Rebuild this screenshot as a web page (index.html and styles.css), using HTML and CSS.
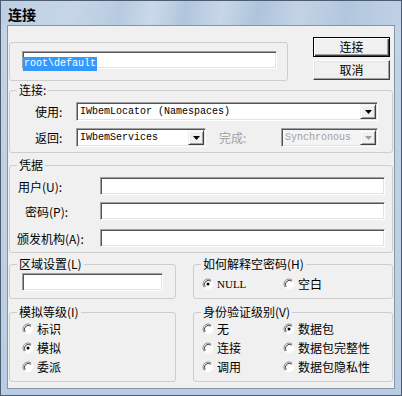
FILE: index.html
```html
<!DOCTYPE html>
<html lang="zh-CN">
<head>
<meta charset="utf-8">
<title>连接</title>
<link rel="stylesheet" href="styles.css">
</head>
<body>
<svg class="defs" width="0" height="0" aria-hidden="true">
  <defs>
    <symbol id="radio" viewBox="0 0 12 12">
      <circle cx="6" cy="6" r="4.5" fill="#fff"/>
      <path d="M9.54 2.46 A5 5 0 0 0 2.46 9.54" fill="none" stroke="#8a8a8a" stroke-width="1"/>
      <path d="M8.8 3.2 A4 4 0 0 0 3.2 8.8" fill="none" stroke="#404040" stroke-width="1"/>
      <path d="M2.46 9.54 A5 5 0 0 0 9.54 2.46" fill="none" stroke="#ffffff" stroke-width="1"/>
    </symbol>
    <symbol id="arrow" viewBox="0 0 7 4">
      <polygon points="0,0 7,0 3.5,4"/>
    </symbol>
  </defs>
</svg>
<div class="window">
  <div class="titlebar"><span class="title">连接</span></div>
  <div class="client">
    <div class="toprow">
      <div class="plainbox">
        <div class="edit ns"><span class="sel">root\default</span></div>
      </div>
      <div class="buttons">
        <button class="btn default">连接</button>
        <button class="btn">取消</button>
      </div>
    </div>

    <fieldset class="group conn">
      <legend>连接:</legend>
      <div class="crow r1">
        <span class="clabel">使用:</span>
        <div class="combo w-use"><span class="ctext">IWbemLocator (Namespaces)</span><span class="dd"><svg width="7" height="4"><use href="#arrow"/></svg></span></div>
      </div>
      <div class="crow r2">
        <span class="clabel">返回:</span>
        <div class="combo w-ret"><span class="ctext">IWbemServices</span><span class="dd"><svg width="7" height="4"><use href="#arrow"/></svg></span></div>
        <span class="clabel dis done">完成:</span>
        <div class="combo w-sync disabled"><span class="ctext">Synchronous</span><span class="dd"><svg width="7" height="4"><use href="#arrow"/></svg></span></div>
      </div>
    </fieldset>

    <fieldset class="group cred">
      <legend>凭据</legend>
      <div class="frow f1"><span class="flabel l-user">用户(U):</span><div class="edit fedit"></div></div>
      <div class="frow f2"><span class="flabel l-pass">密码(P):</span><div class="edit fedit"></div></div>
      <div class="frow f3"><span class="flabel l-auth">颁发机构(A):</span><div class="edit fedit"></div></div>
    </fieldset>

    <div class="pair">
      <fieldset class="group left locale">
        <legend>区域设置(L)</legend>
        <div class="edit ledit"></div>
      </fieldset>
      <fieldset class="group right nullpw">
        <legend>如何解释空密码(H)</legend>
        <div class="rgrid one">
          <label class="radio"><svg class="rb" width="12" height="12"><use href="#radio"/><circle cx="6" cy="6" r="1.5" fill="#000"/></svg><span class="lat">NULL</span></label>
          <label class="radio"><svg class="rb" width="12" height="12"><use href="#radio"/></svg><span>空白</span></label>
        </div>
      </fieldset>
    </div>

    <div class="pair second">
      <fieldset class="group left imp">
        <legend>模拟等级(I)</legend>
        <div class="rcol">
          <label class="radio"><svg class="rb" width="12" height="12"><use href="#radio"/></svg><span>标识</span></label>
          <label class="radio"><svg class="rb" width="12" height="12"><use href="#radio"/><circle cx="6" cy="6" r="1.5" fill="#000"/></svg><span>模拟</span></label>
          <label class="radio"><svg class="rb" width="12" height="12"><use href="#radio"/></svg><span>委派</span></label>
        </div>
      </fieldset>
      <fieldset class="group right auth">
        <legend>身份验证级别(V)</legend>
        <div class="rgrid three">
          <label class="radio"><svg class="rb" width="12" height="12"><use href="#radio"/></svg><span>无</span></label>
          <label class="radio"><svg class="rb" width="12" height="12"><use href="#radio"/><circle cx="6" cy="6" r="1.5" fill="#000"/></svg><span>数据包</span></label>
          <label class="radio"><svg class="rb" width="12" height="12"><use href="#radio"/></svg><span>连接</span></label>
          <label class="radio"><svg class="rb" width="12" height="12"><use href="#radio"/></svg><span>数据包完整性</span></label>
          <label class="radio"><svg class="rb" width="12" height="12"><use href="#radio"/></svg><span>调用</span></label>
          <label class="radio"><svg class="rb" width="12" height="12"><use href="#radio"/></svg><span>数据包隐私性</span></label>
        </div>
      </fieldset>
    </div>
  </div>
</div>
</body>
</html>
```

FILE: styles.css
```css
* { box-sizing: border-box; }
html, body { margin: 0; padding: 0; }
body {
  width: 402px;
  height: 396px;
  overflow: hidden;
  background: #fff;
  font-family: "Noto Sans CJK SC", "Noto Sans", sans-serif;
  font-size: 12px;
  color: #000;
}
.defs { position: absolute; width: 0; height: 0; }

.window {
  width: 402px;
  height: 396px;
  border: 1px solid #4d5c70;
  padding: 0 6px 6px 6px;
  display: flex;
  flex-direction: column;
  background: linear-gradient(180deg, #c3d4e6 0%, #bfd0e3 60%, #b9cce1 100%);
}
.titlebar {
  height: 24px;
  margin: 0 -6px;
  padding: 5px 0 0 7px;
  background:
    linear-gradient(100deg,
      #bccfe3 0%, #c6d6e8 18%, #b7cbe0 30%, #cbd9e9 38%, #b0c6dd 46%,
      #c8d7e8 55%, #aec4dc 64%, #c3d3e5 74%, #b2c7de 86%, #c0d1e4 100%);
}
.title {
  font-size: 14px;
  font-weight: bold;
  line-height: 17px;
  color: #000;
}
.client {
  width: 388px;
  height: 364px;
  border: 1px solid #8395aa;
  background: #f0f0f0;
  padding: 0 0 0 1px;
}

/* top row */
.toprow { display: flex; align-items: flex-start; }
.plainbox {
  width: 279px;
  height: 39px;
  margin-top: 16px;
  border: 1px solid #cdcdcd;
  border-radius: 3px;
  padding: 8px 0 0 12px;
}
.buttons {
  margin-left: 25px;
  margin-top: 11px;
  display: flex;
  flex-direction: column;
  gap: 3px;
}
.btn {
  width: 77px;
  height: 20px;
  padding: 0;
  font-family: "Noto Sans CJK SC", sans-serif;
  font-size: 12px;
  line-height: 16px;
  color: #000;
  background: #f0f0f0;
  border: 1px solid;
  border-color: #fff #404040 #404040 #fff;
  box-shadow: inset -1px -1px #a0a0a0, inset 1px 1px #e3e3e3;
}
.btn.default {
  border: 1px solid #000;
  box-shadow: inset 1px 1px #fff, inset -1px -1px #404040, inset -2px -2px #a0a0a0;
}

/* edits */
.edit {
  background: #fff;
  height: 18px;
  border: 1px solid;
  border-color: #a0a0a0 #fff #fff #a0a0a0;
  box-shadow: inset 1px 1px #555, inset -1px -1px #e3e3e3;
}
.ns { width: 255px; padding: 0 0 0 0; }
.sel {
  display: inline-block;
  background: #3399ff;
  color: #fff;
  font-family: "Liberation Mono", monospace;
  font-size: 10px;
  line-height: 14px;
  padding: 0 1px;
}

/* group boxes */
.group {
  margin: 0;
  padding: 0;
  min-width: 0;
  border: 1px solid #cdcdcd;
  border-radius: 3px;
}
.group legend {
  margin-left: 7px;
  padding: 0 2px;
  font-size: 12px;
  line-height: 14px;
}
.conn { width: 384px; margin-top: 2px; padding-bottom: 5px; }
.crow { display: flex; align-items: center; height: 19px; }
.crow.r1 { margin-top: 5px; }
.crow.r2 { margin-top: 7px; }
.clabel { width: 41px; margin-left: 25px; }
.clabel.done { width: 62px; margin-left: 13px; }
.dis { color: #a0a0a0; }
.combo {
  height: 19px;
  background: #fff;
  border: 1px solid;
  border-color: #a0a0a0 #fff #fff #a0a0a0;
  box-shadow: inset 1px 1px #555, inset -1px -1px #e3e3e3;
  display: flex;
  align-items: center;
  justify-content: space-between;
}
.combo.disabled { background: #f4f4f4; color: #a0a0a0; }
.w-use { width: 302px; }
.w-ret { width: 130px; }
.w-sync { width: 97px; }
.ctext {
  font-family: "Liberation Mono", monospace;
  font-size: 10px;
  line-height: 14px;
  padding-left: 3px;
  white-space: pre;
}
.dd {
  width: 16px;
  height: 15px;
  margin-right: 1px;
  background: #f0f0f0;
  border: 1px solid;
  border-color: #f0f0f0 #404040 #404040 #f0f0f0;
  box-shadow: inset 1px 1px #fff, inset -1px -1px #a0a0a0;
  display: flex;
  align-items: center;
  justify-content: center;
}
.dd svg { fill: #000; display: block; }
.disabled .dd svg { fill: #a0a0a0; }

/* credentials */
.cred { width: 384px; margin-top: 5px; padding-bottom: 5px; }
.frow { display: flex; align-items: center; height: 18px; padding-right: 7px; }
.frow.f1 { margin-top: 5px; }
.frow.f2 { margin-top: 7px; }
.frow.f3 { margin-top: 9px; }
.fedit { width: 285px; margin-left: auto; }
.l-user { margin-left: 8px; }
.l-pass { margin-left: 15px; }
.l-auth { margin-left: 7px; }

/* bottom pairs */
.pair { display: flex; gap: 17px; margin-top: 4px; }
.pair.second { margin-top: 6px; }
.left { width: 167px; }
.right { width: 200px; }
.locale { padding-bottom: 7px; }
.ledit { width: 141px; margin: 2px 0 0 12px; }

.radio { display: flex; align-items: center; gap: 3px; height: 19px; white-space: nowrap; }
.rb { display: block; flex: none; }
.lat { font-family: "Liberation Serif", serif; font-size: 11px; }
.rgrid { display: grid; grid-template-columns: 81px 1fr; margin-left: 8px; }
.rgrid.one { margin-top: 3px; }
.rcol { margin: 0 0 5px 12px; }
.rgrid.three { margin-bottom: 5px; }
```
